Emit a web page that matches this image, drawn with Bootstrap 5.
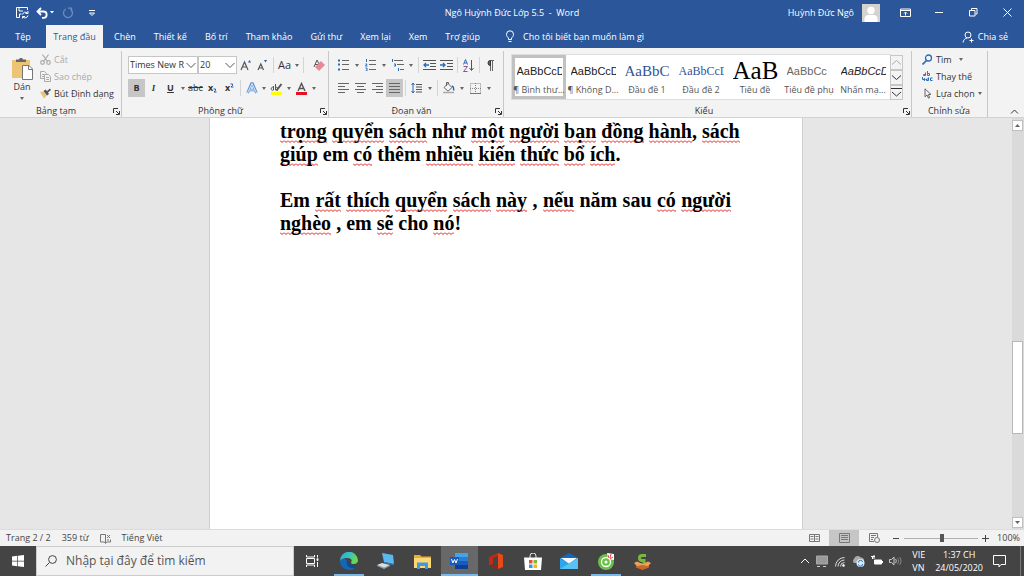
<!DOCTYPE html>
<html lang="vi">
<head>
<meta charset="utf-8">
<meta name="viewport" content="width=device-width, initial-scale=1">
<title>Ngô Huỳnh Đức Lớp 5.5 - Word</title>
<link rel="stylesheet" href="https://cdn.jsdelivr.net/npm/bootstrap@5.3.0/dist/css/bootstrap.min.css">
<style>
  :root { --word-blue: #2b579a; --ribbon: #f3f3f3; --rule: #c8c8c8; --canvas: #e6e6e6; --bar: #444; }
  body { font-family: "Open Sans", "Noto Sans", sans-serif; font-size: 9px; line-height: 12px; color: #333; min-width: 1000px; }
  button { background: none; border: 0; padding: 0; color: inherit; white-space: nowrap; }
  button, select, input { font-family: inherit; font-size: inherit; line-height: inherit; }
  svg { display: block; flex: none; fill: none; }
  svg:not([stroke]) { stroke: currentColor; }
  button:not(.d-block) { display: inline-flex; align-items: center; justify-content: center; }

  /* title bar and tabs */
  .title-row { background: var(--word-blue); color: #fff; height: 25px; display: grid; grid-template-columns: 1fr auto 1fr; align-items: center; }
  .title-row .tools-left { gap: 7px; padding-left: 15px; }
  .win-btn { width: 34px; height: 24px; }
  .tab-row { background: var(--word-blue); color: #fff; height: 23px; }
  .tab-btn { height: 23px; padding: 0 9px; }
  .tab-file { width: 46px; }
  .tab-on { background: var(--ribbon); color: var(--word-blue); width: 57px; margin-right: 2px; }

  /* ribbon */
  .ribbon { background: var(--ribbon); height: 70px; border-bottom: 1px solid #d2d2d2; }
  .rgroup { display: flex; flex-direction: column; justify-content: space-between; border-right: 1px solid var(--rule); margin-top: 3px; padding-left: 6px; }
  .g-clip { width: 122px; } .g-font { width: 207px; } .g-para { width: 175px; } .g-edit { width: 76px; }
  .g-style { padding-left: 8px; }
  .rlabel { display: grid; grid-template-columns: 1fr 9px; text-align: center; align-items: center; height: 12px; margin-left: -6px; }
  .rtools { display: flex; flex-direction: column; gap: 5px; padding-top: 5px; }
  .rrow { display: flex; align-items: center; height: 18px; }
  .paste-btn { width: 32px; margin-right: 2px; }
  .tool { width: 17px; height: 18px; }
  .drop { width: 10px; height: 18px; }
  .g-font .drop { width: 8px; }
  .drop::before, .tri::before { content: ""; border: 2px solid transparent; border-top: 3px solid #666; border-bottom: 0; }
  .tri { display: inline-flex; }
  .pressed { background: #c6c6c6; }
  .split-line { width: 1px; height: 16px; background: #d4d4d4; margin: 0 2px; }
  .combo { height: 18px; border: 1px solid #c6c6c6; border-radius: 0; appearance: none; padding: 0 0 0 1px; color: #333;
    background: #fff url("data:image/svg+xml,%3Csvg xmlns='http://www.w3.org/2000/svg' width='10' height='7'%3E%3Cpath d='M.5 1L5 5.500 9.500 1' fill='none' stroke='%23555'/%3E%3C/svg%3E") no-repeat right 1px center; }
  .font-combo { width: 70px; } .size-combo { width: 39px; }
  .line-btn { height: 17px; gap: 3px; }
  .off { color: #aaa; }
  .gallery { background: #fff; outline: 1px solid #ddd; height: 44px; }
  .style-card { flex: 1 1 54px; height: 44px; color: #555; padding-top: 2px; }
  .style-card.chosen { box-shadow: inset 0 0 0 3px #c1c1c1; }
  .style-card .sample { display: block; width: 45px; margin: 0 auto; height: 24px; line-height: 22px; overflow: hidden; font-family: "Liberation Sans", sans-serif; font-size: 11px; color: #222; text-align: left; }
  .style-card .sample.head-a { font-family: "Liberation Serif", serif; font-size: 15px; color: #2f5496; }
  .style-card .sample.head-b { font-family: "Liberation Serif", serif; font-size: 12px; color: #2f5496; }
  .style-card .sample.big { font-family: "Liberation Serif", serif; font-size: 25px; color: #000; }
  .scroll-set button { width: 13px; height: 15px; border: 1px solid #c6c6c6; }
  .fold-btn { width: 36px; padding: 0 5px 3px 0; }

  /* document */
  .canvas-area { background: var(--canvas); min-height: 0; }
  .sheet { width: 594px; background: #fff; border: 1px solid #cfcfcf; border-width: 0 1px; padding: 2px 71px 0 70px; }
  .sheet p { font: bold 20px/23px "Liberation Serif", serif; color: #000; text-align: justify; margin: 0 0 23px; }
  .sheet u { text-decoration: none; padding-bottom: 1px; background: url("data:image/svg+xml,%3Csvg xmlns='http://www.w3.org/2000/svg' width='4' height='3'%3E%3Cpath d='M0 .5l2 2 2-2' fill='none' stroke='%23e01818'/%3E%3C/svg%3E") repeat-x left bottom; }
  .vscroll { width: 12px; background: #dadada; padding: 2px 1px 1px 0; }
  .vscroll button { width: 11px; height: 11px; background: #fff; border: 1px solid #c0c0c0; }
  .vthumb { height: 93px; background: #fff; border: 1px solid #b8b8b8; }
  .up-space { flex: 211; } .down-space { flex: 84; }

  /* status bar */
  .status { height: 17px; background: #f2f2f2; border-top: 1px solid #dcdcdc; color: #444; }
  .facts { gap: 11px; padding-left: 6px; }
  .view-btn { width: 30px; height: 16px; }
  .zoom-range { appearance: none; width: 74px; height: 12px; background: linear-gradient(#b0b0b0, #b0b0b0) center / 100% 1px no-repeat; margin: 0; }
  .zoom-range::-webkit-slider-thumb { appearance: none; width: 4px; height: 8px; background: #555; }

  /* taskbar */
  .taskbar { height: 30px; background: var(--bar); color: #fff; }
  .start-btn { width: 36px; height: 30px; }
  .search-box { width: 258px; background: #f2f2f2; border: 1px solid #ccc; color: #444; padding-left: 8px; gap: 9px; }
  .search-box input { border: 0; background: none; outline: 0; padding: 0; width: 200px; font-size: 12px; line-height: 16px; }
  .search-box input::placeholder { color: #555; opacity: 1; }
  .task-view { width: 37px; }
  .apps { width: 330px; }
  .apps button { flex: 1; border-bottom: 2px solid transparent; padding-top: 2px; }
  .apps .open { background: linear-gradient(#76b9ed, #76b9ed) center bottom / 30px 2px no-repeat border-box; }
  .apps .front { background: #686868; border-bottom-color: #76b9ed; }
  .tray { gap: 6px; }
  .clock { font-size: 9px; line-height: 13px; }
  .note-btn { height: 30px; padding-right: 14px; border-right: 1px solid #777; margin-right: 3px; }
</style>
</head>
<body class="d-flex flex-column vh-100 overflow-hidden">

<header>
  <div class="title-row">
    <div class="d-flex align-items-center tools-left">
      <button aria-label="Lưu"><svg width="14" height="13" viewBox="0 0 14 13"><path d="M12.500 4V1.500h-11v10h3M4 1.500v3.500h4M4.500 11.500V8h2"/><path d="M7.500 8.500a3 3 0 0 1 5-1.500M13 5v2.500h-2.500M13 9.500a3 3 0 0 1-5 1.500M7.500 12.500V10.500H10"/></svg></button>
      <button aria-label="Hoàn tác"><svg width="12" height="12" viewBox="0 0 12 12" stroke-width="1.800"><path d="M5 1L1.500 4.500 5 8M2 4.500h5.500a3 3 0 0 1 0 6.300H6"/></svg><svg width="7" height="5" viewBox="0 0 7 5"><path d="M2 1h4L4 3.500z" fill="#fff" stroke="none"/></svg></button>
      <button aria-label="Làm lại" style="color:#6d8cbd"><svg width="12" height="12" viewBox="0 0 12 12" stroke-width="1.300"><path d="M4 2a4.500 4.500 0 1 0 4.500.3M6 1.200h3.500v3.500"/></svg></button>
      <button class="ms-1" aria-label="Tùy chỉnh"><svg width="14" height="8" viewBox="0 0 14 8"><path d="M4 1.500h6M4.500 4h5L7 6.500z"/></svg></button>
    </div>
    <div class="text-nowrap">Ngô Huỳnh Đức Lớp 5.5&nbsp; -&nbsp; Word</div>
    <div class="d-flex align-items-center justify-content-end">
      <span class="me-2">Huỳnh Đức Ngô</span>
      <svg class="me-2" width="18" height="18" viewBox="0 0 18 18" stroke="none"><path fill="#d5d3d0" d="M0 0h18v18H0z"/><circle cx="9" cy="6.500" r="3.700" fill="#fff"/><path fill="#fff" d="M2.500 18v-3.500a4 4 0 0 1 4-3.500h5a4 4 0 0 1 4 3.500V18z"/></svg>
      <button class="win-btn" aria-label="Hiển thị dải băng"><svg width="11" height="9" viewBox="0 0 11 9"><path d="M.5 1h10v7.500H.5zM.5 2.500h10M5.500 7.500v-3M4 5.500L5.500 4 7 5.500"/></svg></button>
      <button class="win-btn" aria-label="Thu nhỏ"><svg width="9" height="3" viewBox="0 0 9 3"><path d="M0 1.500h8"/></svg></button>
      <button class="win-btn" aria-label="Khôi phục"><svg width="9" height="9" viewBox="0 0 9 9"><path d="M.5 2.500h5.500v5.500H.5zM2.500 2V.500h5.500V6H6.500"/></svg></button>
      <button class="win-btn" aria-label="Đóng"><svg width="9" height="9" viewBox="0 0 9 9"><path d="M.5.5l8 8M8.500.5l-8 8"/></svg></button>
    </div>
  </div>
  <nav class="tab-row d-flex align-items-center">
    <button class="tab-btn tab-file">Tệp</button>
    <button class="tab-btn tab-on">Trang đầu</button>
    <button class="tab-btn">Chèn</button>
    <button class="tab-btn">Thiết kế</button>
    <button class="tab-btn">Bố trí</button>
    <button class="tab-btn">Tham khảo</button>
    <button class="tab-btn">Gửi thư</button>
    <button class="tab-btn">Xem lại</button>
    <button class="tab-btn">Xem</button>
    <button class="tab-btn">Trợ giúp</button>
    <button class="ms-3 gap-2"><svg width="10" height="13" viewBox="0 0 10 13"><path d="M3.500 9.500V8C2.500 7 1.500 6 1.500 4.300a3.500 3.500 0 0 1 7 0C8.500 6 7.500 7 6.500 8v1.500zM3.500 11.500h3"/></svg>Cho tôi biết bạn muốn làm gì</button>
    <button class="ms-auto me-3 gap-1"><svg width="12" height="12" viewBox="0 0 12 12"><circle cx="6" cy="4" r="3"/><path d="M1 11.500c.5-2.500 2-4 4-4.500M7.500 9.500h4M9.500 7.500v4"/></svg>Chia sẻ</button>
  </nav>
</header>

<section class="ribbon d-flex" aria-label="Trang đầu">
  <div class="rgroup g-clip">
    <div class="d-flex">
      <button class="paste-btn flex-column mt-1"><svg width="23" height="24" viewBox="0 0 23 24" stroke="none"><path fill="#edc374" d="M1 3h18v18H1z"/><path fill="#666" d="M5 5V2.500h3C8 .5 12 .5 12 2.500h3V5z"/><path fill="#fff" stroke="#777" d="M11.500 8.500h6.500l3.500 3.500v10.500h-10z"/><path d="M17.500 8.500v4h4" stroke="#777"/></svg>Dán<span class="tri mt-1"></span></button>
      <div class="d-flex flex-column align-items-start">
        <button class="line-btn off" disabled><svg width="11" height="11" viewBox="0 0 11 11" stroke-width="1.200"><path d="M2.500.5l5 7M8.500.5l-5 7"/><circle cx="2.500" cy="8.500" r="1.800"/><circle cx="8.500" cy="8.500" r="1.800"/></svg>Cắt</button>
        <button class="line-btn off" disabled><svg width="11" height="11" viewBox="0 0 11 11"><path d="M.5.5h4l2 2v5h-6zM2 3.500h2M2 5.500h2"/><path fill="#f3f3f3" d="M4.500 3.500h4l2 2v5h-6zM6 6.500h3M6 8.500h3"/></svg>Sao chép</button>
        <button class="line-btn"><svg width="11" height="11" viewBox="0 0 11 11" stroke="none"><path fill="#edc374" d="M0 4l3.500-.5L7 7.500 4 10.500z"/><path fill="#555" d="M3.500 3L5.500 1.500 7 3l3-2.500L11 2 8 4.500l1 1.500-2 1.500z"/></svg>Bút Định dạng</button>
      </div>
    </div>
    <div class="rlabel"><span>Bảng tạm</span><button aria-label="Mở Bảng tạm"><svg width="7" height="7" viewBox="0 0 7 7"><path d="M.5 5V.5H5M3 3l3 3M6.500 3v3.500H3"/></svg></button></div>
  </div>

  <div class="rgroup g-font">
    <div class="rtools">
      <div class="rrow">
        <select class="combo font-combo" aria-label="Phông"><option>Times New R</option></select>
        <select class="combo size-combo" aria-label="Cỡ"><option>20</option></select>
        <button class="tool" aria-label="Tăng cỡ"><svg width="12" height="12" viewBox="0 0 12 12"><path d="M1 11L4.500 3 8 11M2.500 8h4" stroke="#555" stroke-width="1.200"/><path d="M8 3.500L9.500 1 11 3.500z" fill="#2b579a" stroke="none"/></svg></button>
        <button class="tool" aria-label="Giảm cỡ"><svg width="12" height="12" viewBox="0 0 12 12"><path d="M1 11l2.800-6 2.700 6M2.300 9h3" stroke="#555" stroke-width="1.200"/><path d="M7 1l1.500 2.500L10 1z" fill="#2b579a" stroke="none"/></svg></button>
        <span class="split-line"></span>
        <button class="tool" aria-label="Đổi chữ hoa" style="font-size:11px">Aa</button><button class="drop" aria-label="Tùy chọn"></button>
        <span class="split-line"></span>
        <button class="tool ms-1" aria-label="Xóa định dạng"><svg width="12" height="13" viewBox="0 0 12 13"><path d="M1 8l3-7 2 4M2 5.500h3" stroke="#555"/><path fill="#e8899a" stroke="none" d="M2 8l6-6 4 4-6 6z"/></svg></button>
      </div>
      <div class="rrow">
        <button class="tool pressed fw-bold" aria-label="Đậm">B</button>
        <button class="tool fst-italic fw-bold" aria-label="Nghiêng" style="font-family:'Liberation Serif',serif">I</button>
        <button class="tool fw-bold text-decoration-underline" aria-label="Gạch dưới">U</button><button class="drop" aria-label="Tùy chọn"></button>
        <button class="tool text-decoration-line-through" aria-label="Gạch ngang">abc</button>
        <button class="tool fw-bold" aria-label="Chỉ số dưới">x<svg width="4" height="5" viewBox="0 0 4 5" class="align-self-end mb-1"><path d="M.5 1h2v1.500L1 4h2.500" stroke="#2b579a"/></svg></button>
        <button class="tool fw-bold" aria-label="Chỉ số trên">x<svg width="4" height="5" viewBox="0 0 4 5" class="align-self-start mt-1"><path d="M.5 1h2v1.500L1 4h2.500" stroke="#2b579a"/></svg></button>
        <span class="split-line"></span>
        <button class="tool" aria-label="Hiệu ứng"><svg width="12" height="12" viewBox="0 0 12 12"><path d="M1.500 11L5.500 1.500h1l4 9.500M3.500 8h5" stroke="#5b93d6" stroke-width="2.600"/><path d="M1.500 11L6 1.500 10.500 11M3.500 8h5" stroke="#fff" stroke-width=".8"/></svg></button><button class="drop" aria-label="Tùy chọn"></button>
        <button class="tool" aria-label="Tô sáng"><svg width="13" height="13" viewBox="0 0 13 13"><path fill="#ff0" stroke="none" d="M1 10h11v3H1z"/><path d="M3.500 5.500a1.500 1.500 0 1 0 0 2.500V4M5.500 2v6M5.500 5.500c3-1 3 2.500 0 2.500" stroke="#555"/><path d="M6.500 8.500L11.500 2" stroke="#555" stroke-width="2"/></svg></button><button class="drop" aria-label="Tùy chọn"></button>
        <button class="tool" aria-label="Màu phông"><svg width="13" height="13" viewBox="0 0 13 13"><path fill="#e81123" stroke="none" d="M1 10h11v3H1z"/><path d="M3 9l3.500-7.500L10 9M4.500 6.500h4" stroke="#555" stroke-width="1.400"/></svg></button><button class="drop" aria-label="Tùy chọn"></button>
      </div>
    </div>
    <div class="rlabel"><span>Phông chữ</span><button aria-label="Mở Phông chữ"><svg width="7" height="7" viewBox="0 0 7 7"><path d="M.5 5V.5H5M3 3l3 3M6.500 3v3.500H3"/></svg></button></div>
  </div>

  <div class="rgroup g-para">
    <div class="rtools">
      <div class="rrow">
        <button class="tool" aria-label="Dấu đầu dòng"><svg width="12" height="12" viewBox="0 0 12 12"><path d="M4 1.500h7M4 5.500h7M4 10.500h7" stroke="#666"/><path d="M0 1.500h2M0 5.500h2M0 10.500h2" stroke="#2b6cb8" stroke-width="2"/></svg></button><button class="drop" aria-label="Tùy chọn"></button>
        <button class="tool" aria-label="Đánh số"><svg width="12" height="12" viewBox="0 0 12 12"><path d="M4 1.500h7M4 5.500h7M4 10.500h7" stroke="#666"/><path d="M1.500 0v3M.5 5h1.500L.5 7h2M.5 9h1.500v3H.5" stroke="#2b6cb8"/></svg></button><button class="drop" aria-label="Tùy chọn"></button>
        <button class="tool" aria-label="Đa mức"><svg width="14" height="12" viewBox="0 0 14 12"><path d="M3 1.500h9M6 5.500h7M9 10.500h4" stroke="#666"/><path d="M1.500 0v3M3 5h1.500v2H3M7.500 9v3" stroke="#2b6cb8"/></svg></button><button class="drop" aria-label="Tùy chọn"></button>
        <span class="split-line"></span>
        <button class="tool" aria-label="Giảm thụt lề"><svg width="13" height="11" viewBox="0 0 13 11"><path d="M0 .5h13M7 3.500h6M7 6.500h6M0 9.500h13" stroke="#555"/><path d="M6 5H1M3 3L1 5l2 2" stroke="#2b6cb8" stroke-width="1.300"/></svg></button>
        <button class="tool" aria-label="Tăng thụt lề"><svg width="13" height="11" viewBox="0 0 13 11"><path d="M0 .5h13M7 3.500h6M7 6.500h6M0 9.500h13" stroke="#555"/><path d="M0 5h5M3 3l2 2-2 2" stroke="#2b6cb8" stroke-width="1.300"/></svg></button>
        <span class="split-line"></span>
        <button class="tool" aria-label="Sắp xếp"><svg width="11" height="13" viewBox="0 0 11 13"><path d="M.5 5.500L2.500.5l2 5M1.200 4h2.600" stroke="#2b6cb8"/><path d="M.5 7.500h4l-4 5h4" stroke="#80569c"/><path d="M8.500 1v10M6.500 9l2 2.500 2-2.500" stroke="#555"/></svg></button>
        <span class="split-line"></span>
        <button class="tool" aria-label="Dấu đoạn"><svg width="9" height="11" viewBox="0 0 9 11"><path d="M4.500 11V.5H8M6.500.5V11" stroke="#666"/><path d="M4.500.5a2.500 2.500 0 0 0 0 5z" fill="#666"/></svg></button>
      </div>
      <div class="rrow">
        <button class="tool" aria-label="Trái"><svg width="11" height="10" viewBox="0 0 11 10"><path d="M0 .5h11M0 3.500h7M0 6.500h11M0 9.500h7" stroke="#666"/></svg></button>
        <button class="tool" aria-label="Giữa"><svg width="11" height="10" viewBox="0 0 11 10"><path d="M0 .5h11M2 3.500h7M0 6.500h11M2 9.500h7" stroke="#666"/></svg></button>
        <button class="tool" aria-label="Phải"><svg width="11" height="10" viewBox="0 0 11 10"><path d="M0 .5h11M4 3.500h7M0 6.500h11M4 9.500h7" stroke="#666"/></svg></button>
        <button class="tool pressed" aria-label="Đều"><svg width="11" height="10" viewBox="0 0 11 10"><path d="M0 .5h11M0 3.500h11M0 6.500h11M0 9.500h11" stroke="#666"/></svg></button>
        <span class="split-line"></span>
        <button class="tool" aria-label="Giãn dòng"><svg width="11" height="12" viewBox="0 0 11 12"><path d="M5 2.500h6M5 5h6M5 7.500h6M5 10h6" stroke="#555"/><path d="M2 1v10M.5 3L2 1l1.500 2M.5 9L2 11l1.500-2" stroke="#2b6cb8"/></svg></button><button class="drop" aria-label="Tùy chọn"></button>
        <span class="split-line"></span>
        <button class="tool" aria-label="Tô bóng"><svg width="13" height="12" viewBox="0 0 13 12"><path d="M6 1.500L10 5.500 6 9.200 2 5.500zM4.500 4V.5h2V2" stroke="#666"/><path d="M10 4c1.500.5 2 2 1.500 4.500" stroke="#2b6cb8" stroke-width="1.500"/><path d="M1 10.500h11" stroke="#aaa" stroke-width="1.500"/></svg></button><button class="drop" aria-label="Tùy chọn"></button>
        <button class="tool" aria-label="Viền"><svg width="11" height="11" viewBox="0 0 11 11"><path d="M.5.500h10v10H.5zM5.500 0v11M0 5.500h11" stroke="#888" stroke-dasharray="1 1"/><path d="M0 10.500h11" stroke="#777"/></svg></button><button class="drop" aria-label="Tùy chọn"></button>
      </div>
    </div>
    <div class="rlabel"><span>Đoạn văn</span><button aria-label="Mở Đoạn văn"><svg width="7" height="7" viewBox="0 0 7 7"><path d="M.5 5V.5H5M3 3l3 3M6.500 3v3.500H3"/></svg></button></div>
  </div>

  <div class="rgroup g-style flex-fill">
    <div class="d-flex mt-1">
      <div class="gallery d-flex flex-fill">
        <button class="style-card chosen d-block"><span class="sample">AaBbCcDd</span>¶ Bình thư...</button>
        <button class="style-card d-block"><span class="sample">AaBbCcDd</span>¶ Không D...</button>
        <button class="style-card d-block"><span class="sample head-a">AaBbC</span>Đầu đề 1</button>
        <button class="style-card d-block"><span class="sample head-b">AaBbCcD</span>Đầu đề 2</button>
        <button class="style-card d-block"><span class="sample big">AaB</span>Tiêu đề</button>
        <button class="style-card d-block"><span class="sample" style="color:#666">AaBbCc</span>Tiêu đề phụ</button>
        <button class="style-card d-block"><span class="sample fst-italic">AaBbCcDd</span>Nhấn mạ...</button>
      </div>
      <div class="scroll-set d-flex flex-column me-2">
        <button class="off" aria-label="Lên"><svg width="9" height="5" viewBox="0 0 9 5"><path d="M0 4.500l4.500-4 4.500 4"/></svg></button>
        <button aria-label="Xuống"><svg width="9" height="5" viewBox="0 0 9 5"><path d="M0 .5l4.500 4 4.500-4"/></svg></button>
        <button aria-label="Thêm"><svg width="11" height="9" viewBox="0 0 11 9"><path d="M0 .5h11M1 4l4.500 4L10 4"/></svg></button>
      </div>
    </div>
    <div class="rlabel"><span>Kiểu</span><button aria-label="Mở Kiểu"><svg width="7" height="7" viewBox="0 0 7 7"><path d="M.5 5V.5H5M3 3l3 3M6.500 3v3.500H3"/></svg></button></div>
  </div>

  <div class="rgroup g-edit">
    <div class="d-flex flex-column align-items-start ps-1">
      <button class="line-btn"><svg width="11" height="11" viewBox="0 0 11 11"><circle cx="6.500" cy="4" r="3" stroke="#2b6cb8" stroke-width="1.300"/><path d="M4.500 6.500L.5 10.500" stroke="#2b6cb8" stroke-width="1.700"/></svg>Tìm<span class="tri ms-1"></span></button>
      <button class="line-btn"><svg width="11" height="11" viewBox="0 0 11 11"><path d="M3.500 1.500v3h-2v-1h2M5.500 0v4.500h2v-2h-2" stroke="#80569c"/><path d="M6.500 6.500v3h-2v-1.500h2M10.500 7h-2v2.500h2M.5 6v2.500H3M2 7l1.200 1.500L2 10" stroke="#2b6cb8"/></svg>Thay thế</button>
      <button class="line-btn"><svg width="11" height="11" viewBox="0 0 11 11"><path d="M3 .8v8L5 7l1.500 3.200 1.200-.5L6.300 6.500H9z" stroke="#666"/></svg>Lựa chọn<span class="tri"></span></button>
    </div>
    <div class="rlabel"><span class="ms-2">Chỉnh sửa</span></div>
  </div>
  <button class="fold-btn align-self-end justify-content-end" aria-label="Thu gọn dải băng"><svg width="9" height="5" viewBox="0 0 9 5"><path d="M1 4.500l3.500-3.500L8 4.500"/></svg></button>
</section>

<main class="canvas-area d-flex flex-fill overflow-hidden">
  <div class="flex-fill d-flex justify-content-center">
    <article class="sheet">
      <p><span class="text-nowrap"><u>trọng</u> <u>quyển</u> <u>sách</u> như <u>một</u> <u>người</u> <u>bạn</u> <u>đồng</u> <u>hành</u>, <u>sách</u></span><br><u>giúp</u> em <u>có</u> thêm <u>nhiều</u> <u>kiến</u> <u>thức</u> <u>bổ</u> <u>ích</u>.</p>
      <p>Em <u>rất</u> <u>thích</u> <u>quyển</u> <u>sách</u> <u>này</u> , <u>nếu</u> năm sau <u>có</u> <u>người</u> <u>nghèo</u> , em <u>sẽ</u> cho <u>nó</u>!</p>
    </article>
  </div>
  <div class="vscroll d-flex flex-column">
    <button aria-label="Cuộn lên"><svg width="5" height="3" viewBox="0 0 5 3" stroke="none"><path d="M0 3l2.500-3L5 3z" fill="#666"/></svg></button>
    <div class="up-space"></div><div class="vthumb"></div><div class="down-space"></div>
    <button aria-label="Cuộn xuống"><svg width="5" height="3" viewBox="0 0 5 3" stroke="none"><path d="M0 0l2.500 3L5 0z" fill="#666"/></svg></button>
  </div>
</main>

<footer>
  <div class="status d-flex align-items-center">
    <div class="facts d-flex align-items-center">
      <span>Trang 2 / 2</span><span>359 từ</span>
      <svg width="11" height="11" viewBox="0 0 11 11"><path d="M5.500 1.500h-5v7.500h4l1 1.500 1-1.500h4V6.500M5.500 1.500V10M7 2l3 3M10 2L7 5M7 7h2" stroke="#777"/></svg>
      <span>Tiếng Việt</span>
    </div>
    <div class="ms-auto d-flex align-items-center">
      <button class="view-btn" aria-label="Chế độ đọc"><svg width="11" height="10" viewBox="0 0 11 10" stroke="#777"><path d="M5.500 1.500h-5v7h5zM5.500 1.500h5v7h-5zM1.500 3.500h3M1.500 6h3M6.500 3.500h3M6.500 6h3"/></svg></button>
      <button class="view-btn pressed" aria-label="Bố trí in"><svg width="11" height="10" viewBox="0 0 11 10" stroke="#777"><path d="M.5.5h10v9H.5zM2 2.500h7M2 4.500h7M2 6.500h7"/></svg></button>
      <button class="view-btn" aria-label="Bố trí web"><svg width="11" height="10" viewBox="0 0 11 10" stroke="#777"><path d="M5 8.500H.5V.5h8V4M2 2.500h5M2 4.500h3M2 6.500h2"/><circle cx="8" cy="7" r="2.500"/></svg></button>
      <button class="px-1" aria-label="Thu nhỏ"><svg width="7" height="7" viewBox="0 0 7 7"><path d="M0 3.500h6"/></svg></button>
      <input class="zoom-range" type="range" min="0" max="100" value="51" aria-label="Thu phóng">
      <button class="px-1" aria-label="Phóng to"><svg width="7" height="7" viewBox="0 0 7 7"><path d="M0 3.500h7M3.500 0v7"/></svg></button>
      <span class="ms-1 me-1">100%</span>
    </div>
  </div>

  <div class="taskbar d-flex">
    <button class="start-btn" aria-label="Bắt đầu"><svg width="12" height="12" viewBox="0 0 12 12" stroke="none"><path fill="#fff" d="M0 1.600L5.300.8v4.900H0zM6 .7L12 0v5.700H6zM0 6.400h5.300v4.900L0 10.500zM6 6.400h6V12l-6-.8z"/></svg></button>
    <label class="search-box d-flex align-items-center"><svg width="12" height="12" viewBox="0 0 12 12"><circle cx="7.500" cy="4.500" r="3.900"/><path d="M4.500 7.500L.5 11.500"/></svg><input type="search" placeholder="Nhập tại đây để tìm kiếm" aria-label="Tìm kiếm"></label>
    <button class="task-view" aria-label="Xem tác vụ"><svg width="13" height="12" viewBox="0 0 13 12"><path d="M.5 0v2h8V0M.5 12v-2h8v2M.5 3.500h8v5h-8zM11.500 0v2.500M11.500 7v5M11.500 3.500v2.500"/><path d="M10.500 4.500h2" stroke-width="2"/></svg></button>
    <div class="apps d-flex">
      <button class="open" aria-label="Edge"><svg width="18" height="18" viewBox="0 0 18 18" stroke="none"><defs><linearGradient id="eg" x1="0" y1="0" x2="1" y2=".4"><stop offset="0" stop-color="#2aa9e0"/><stop offset=".5" stop-color="#35c1c8"/><stop offset="1" stop-color="#6bd84f"/></linearGradient></defs><path fill="#1565b8" d="M0 9a9 9 0 0 0 15.500 6.200c-5 2-9-1-8.500-5C7 8 4 5 0 9z"/><path fill="url(#eg)" d="M0 9a9 9 0 0 1 18-.5c0 4-6.500 4.500-7 2 2-3-1-5-4-4.500C4 6 1 7 0 9z"/><path fill="#0c4a94" d="M7.500 8.500c-2 4 1 8 7.500 7.200 1-.6 1.500-1.200 2-2.200-4 1.500-8-.5-9.500-5z"/></svg></button>
      <button aria-label="Máy tính"><svg width="18" height="16" viewBox="0 0 18 16" stroke="none"><path fill="#5eb8ee" d="M5 0l11 2 1 9-10-2z"/><path fill="#2f7fc4" d="M7 9l10 2-1 1-9-2z"/><path fill="#d6dde3" d="M0 12l5-2 8 2-6 3.500z"/><path fill="#8d99a3" d="M0 12l7 2.500 6-2.500v1l-6 3-7-3z"/></svg></button>
      <button aria-label="Tệp"><svg width="17" height="15" viewBox="0 0 17 15" stroke="none"><path fill="#e9ac35" d="M0 1h6l1.500 1.500H17V14H0z"/><path fill="#fbd875" d="M0 4h17v10H0z"/><path fill="#3f9bdd" d="M3 8.500h11V15h-3v-3H6v3H3z"/></svg></button>
      <button class="front" aria-label="Word"><svg width="18" height="16" viewBox="0 0 18 16" stroke="none"><path fill="#41a5ee" d="M5 0h13v4H5z"/><path fill="#2b7cd3" d="M5 4h13v4H5z"/><path fill="#185abd" d="M5 8h13v4H5z"/><path fill="#103f91" d="M5 12h13v4H5z"/><path fill="#185abd" d="M0 4h9v8H0z"/><path d="M1.500 6l1.300 4L4.500 6.500 6 10l1.500-4" stroke="#fff"/></svg></button>
      <button aria-label="Office"><svg width="14" height="16" viewBox="0 0 14 16" stroke="none"><path fill="#e64a19" d="M9 0l5 2v12l-5 2z"/><path fill="#c62812" d="M0 4l9-4v3L4 5v6l-4 1.500z"/><path fill="#a81d10" d="M0 12.500L9 13v3z"/></svg></button>
      <button aria-label="Cửa hàng"><svg width="18" height="17" viewBox="0 0 18 17" stroke="none"><path d="M6 5V3a3 3 0 0 1 6 0v2" stroke="#e8e8e8"/><path fill="#fff" d="M0 4.500h18L17 17H1z"/><path fill="#e8502a" d="M5 7h3.500v3.500H5z"/><path fill="#7db93b" d="M9.500 7H13v3.500H9.500z"/><path fill="#2e9be0" d="M5 11.500h3.500V15H5z"/><path fill="#f6b51d" d="M9.500 11.500H13V15H9.500z"/></svg></button>
      <button aria-label="Thư"><svg width="18" height="16" viewBox="0 0 18 16" stroke="none"><path fill="#1468bd" d="M0 5l9-5 9 5v4H0z"/><path fill="#f4f9fd" d="M1 5h16l-8 6z"/><path fill="#2fa5ec" d="M0 5l9 6 9-6v11H0z"/><path fill="#56c2f6" d="M0 16L18 5v11z"/></svg></button>
      <button class="open" aria-label="Cốc Cốc"><svg width="17" height="17" viewBox="0 0 17 17" stroke="none"><circle cx="8" cy="9" r="8" fill="#6cc04a"/><circle cx="8" cy="9" r="4.500" stroke="#fff" stroke-width="1.300"/><circle cx="8" cy="9" r="1.500" fill="#fff"/><path fill="#fff" d="M9 0l7 1v6l-6-1z"/><path d="M10 2l1 3M13 1l-1 4M15 4l-3 2" stroke="#e0483e"/></svg></button>
      <button aria-label="Trò chơi"><svg width="17" height="17" viewBox="0 0 17 17" stroke="none"><path fill="#c9682c" d="M2 10h13v4.500L8.500 17 2 14.500z"/><path fill="#eda35b" d="M0 10l3-1.500L8.500 11 14 8.500l3 1.500-3 3-5.500-1L3 13z"/><path d="M12 2.500H8q-2.500 0-2.500 2.500T8 7.500h2V10" stroke="#79b83e" stroke-width="3"/></svg></button>
    </div>
    <div class="ms-auto d-flex align-items-center tray">
      <svg width="10" height="12" viewBox="0 0 10 12"><path d="M1 8l4-4 4 4"/></svg>
      <svg width="12" height="12" viewBox="0 0 12 12"><path d="M.5 1h11v8H.5z" fill="#999" stroke="#aaa"/><path d="M1 11.500h3M7 11.500h3" stroke="#ccc"/></svg>
      <svg width="12" height="12" viewBox="0 0 12 12" stroke="#ddd"><path d="M1.500 11.500a9 9 0 0 1 9-9M4 11.500A6.500 6.500 0 0 1 10.500 5M6.500 11.500a4 4 0 0 1 4-4"/><circle cx="9.500" cy="10.500" r="1" fill="#fff"/></svg>
      <svg width="13" height="12" viewBox="0 0 13 12" stroke="none"><path fill="#aaa" d="M2 8a2.500 2.500 0 0 1 0-4 4 4 0 0 1 7-1.500A3 3 0 0 1 12 6v2z"/><circle cx="8.500" cy="8" r="4" fill="#dceaf6"/><path d="M6.500 7.500a2 2 0 0 1 4-.5M10.500 9a2 2 0 0 1-4 .500" stroke="#2577c0"/></svg>
      <svg width="12" height="12" viewBox="0 0 12 12"><path d="M3.500 5h7v4h-7z" fill="#fff"/><path d="M1.500 1v3M0 1.500h4M3 0v4M11.500 6v2"/></svg>
      <svg width="13" height="12" viewBox="0 0 13 12" stroke="#ccc"><path d="M.5 4.500h2L5 2v8L2.500 7.500h-2zM6.500 4c1 1.500 1 2.500 0 4"/><path d="M8.500 3c1.500 2 1.500 4 0 6M10.500 2c2 2.500 2 5.500 0 8" stroke="#888"/></svg>
      <div class="clock ms-1">VIE<br>VN</div>
      <div class="clock text-center ms-1">1:37 CH<br>24/05/2020</div>
      <button class="note-btn ms-1" aria-label="Thông báo"><svg width="13" height="13" viewBox="0 0 13 13"><path d="M.5.5h12v9H8L6 12V9.500H.5z"/></svg></button>
    </div>
  </div>
</footer>
<script src="https://cdn.jsdelivr.net/npm/bootstrap@5.3.0/dist/js/bootstrap.bundle.min.js"></script>
</body>
</html>
